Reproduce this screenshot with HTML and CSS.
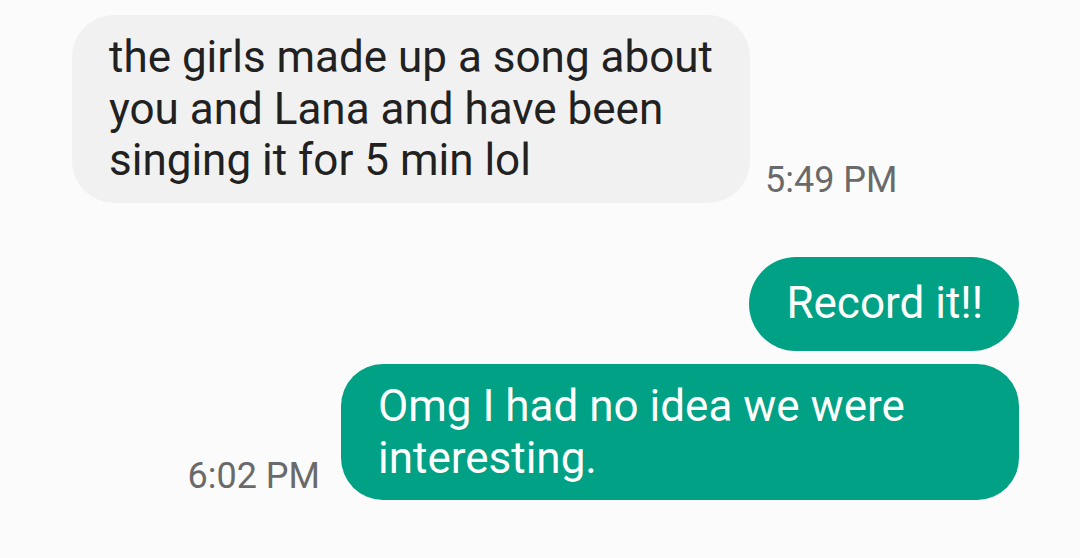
FILE: index.html
```html
<!DOCTYPE html>
<html>
<head>
<meta charset="utf-8">
<link rel="stylesheet" href="styles.css">
</head>
<body>
<div class="chat">
  <div class="row in">
    <div class="bubble grey">the girls made up a song about you and Lana and have been singing it for 5 min lol</div>
    <div class="time t1">5:49 PM</div>
  </div>
  <div class="row out first">
    <div class="bubble green single">Record it!!</div>
  </div>
  <div class="row out second">
    <div class="time t2">6:02 PM</div>
    <div class="bubble green">Omg I had no idea we were interesting.</div>
  </div>
</div>
</body>
</html>
```

FILE: styles.css
```css
html, body {
  margin: 0;
  padding: 0;
  background: #fbfbfb;
  width: 1080px;
  height: 558px;
  overflow: hidden;
}
.chat {
  display: flex;
  flex-direction: column;
  padding-top: 15px;
  font-family: Roboto, "Noto Sans", sans-serif;
}
.row {
  display: flex;
  align-items: flex-end;
}
.row.in {
  padding-left: 72px;
  gap: 15px;
}
.row.out {
  justify-content: flex-end;
  padding-right: 61px;
  gap: 21px;
}
.row.first {
  margin-top: 54px;
}
.row.second {
  margin-top: 13px;
}
.bubble {
  box-sizing: border-box;
  max-width: 678px;
  font-size: 44px;
  line-height: 51.5px;
  padding: 17px 33px 16px 37px;
  border-radius: 42px;
}
.bubble.grey {
  background: #f1f1f1;
  color: #212121;
}
.bubble.green {
  background: #00a185;
  color: #ffffff;
}
.bubble.single {
  padding: 21.5px 36px 21.5px 37px;
  border-radius: 47px;
}
.time {
  font-size: 36px;
  line-height: 40px;
  color: #6a6a6a;
  white-space: nowrap;
}
.t1 {
  margin-bottom: 3px;
}
.t2 {
  margin-bottom: 4px;
}
```
